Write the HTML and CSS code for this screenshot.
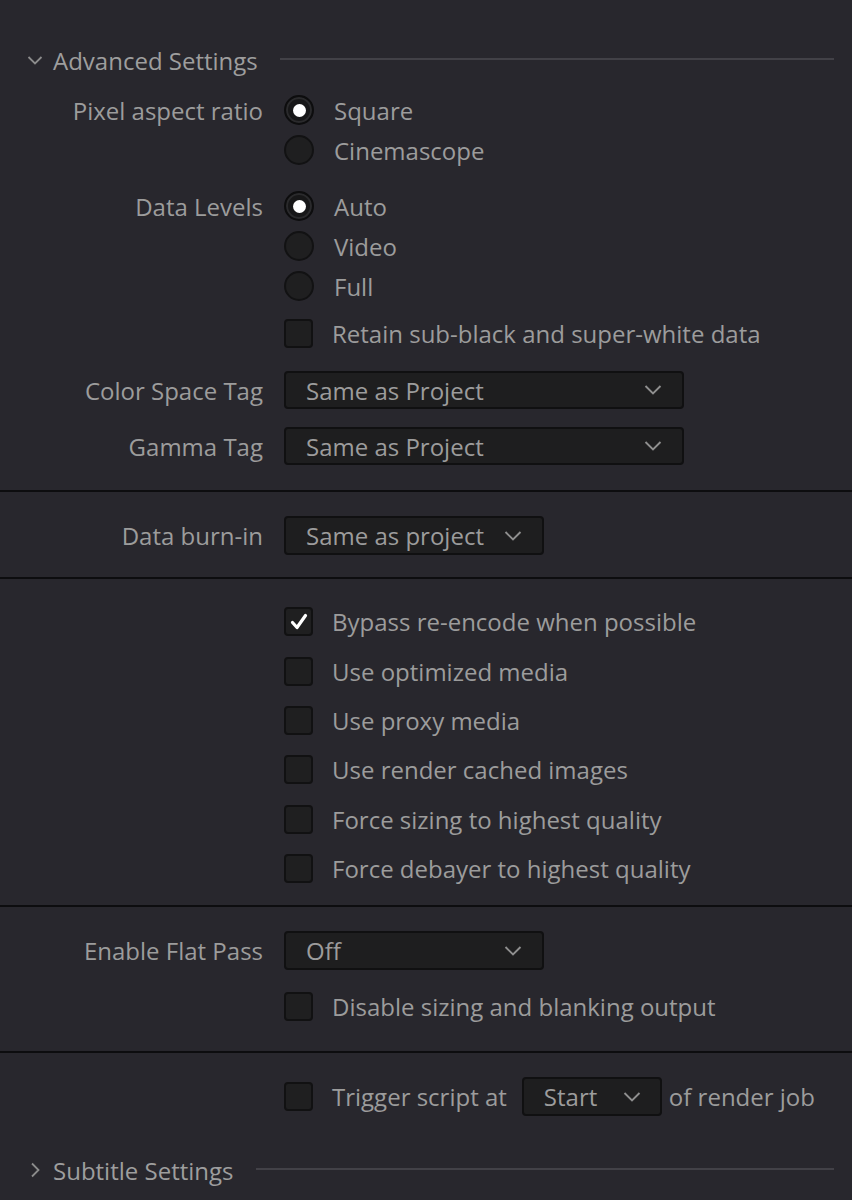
FILE: index.html
```html
<!DOCTYPE html>
<html>
<head>
<meta charset="utf-8">
<link rel="stylesheet" href="styles.css">
</head>
<body>
<div class="panel">
  <div class="sec-head top">
    <svg class="chev" viewBox="0 0 16 16" width="16" height="16"><path d="M1.5 5 L8 11.5 L14.5 5" fill="none" stroke="#8c8c8c" stroke-width="1.8"/></svg>
    <span class="sec-title">Advanced Settings</span>
    <span class="sec-line"></span>
  </div>

  <div class="group g-par">
    <div class="row r40"><div class="label">Pixel aspect ratio</div><div class="ctl"><span class="radio on"></span><span class="opt">Square</span></div></div>
    <div class="row r40"><div class="label"></div><div class="ctl"><span class="radio"></span><span class="opt">Cinemascope</span></div></div>
  </div>

  <div class="group g-levels">
    <div class="row r40"><div class="label">Data Levels</div><div class="ctl"><span class="radio on"></span><span class="opt">Auto</span></div></div>
    <div class="row r40"><div class="label"></div><div class="ctl"><span class="radio"></span><span class="opt">Video</span></div></div>
    <div class="row r40"><div class="label"></div><div class="ctl"><span class="radio"></span><span class="opt">Full</span></div></div>
    <div class="row r40 retain"><div class="label"></div><div class="ctl"><span class="check"></span><span class="opt c">Retain sub-black and super-white data</span></div></div>
  </div>

  <div class="group g-tags">
    <div class="row r38"><div class="label">Color Space Tag</div><div class="ctl"><div class="drop wide"><span>Same as Project</span><svg class="dchev" viewBox="0 0 18 12" width="18" height="12"><path d="M1.5 2 L9 9.5 L16.5 2" fill="none" stroke="#8f8f8f" stroke-width="1.9"/></svg></div></div></div>
    <div class="row r38 gamma"><div class="label">Gamma Tag</div><div class="ctl"><div class="drop wide"><span>Same as Project</span><svg class="dchev" viewBox="0 0 18 12" width="18" height="12"><path d="M1.5 2 L9 9.5 L16.5 2" fill="none" stroke="#8f8f8f" stroke-width="1.9"/></svg></div></div></div>
  </div>

  <div class="sep s1"></div>

  <div class="group g-burn">
    <div class="row r39"><div class="label">Data burn-in</div><div class="ctl"><div class="drop mid"><span>Same as project</span><svg class="dchev" viewBox="0 0 18 12" width="18" height="12"><path d="M1.5 2 L9 9.5 L16.5 2" fill="none" stroke="#8f8f8f" stroke-width="1.9"/></svg></div></div></div>
  </div>

  <div class="sep s2"></div>

  <div class="group g-checks">
    <div class="row r49"><div class="label"></div><div class="ctl"><span class="check on"><svg viewBox="0 0 20 20" width="20" height="20"><path d="M3.5 10.5 L8 15.5 L16.5 3.5" fill="none" stroke="#ffffff" stroke-width="3.2" stroke-linejoin="round" stroke-linecap="round"/></svg></span><span class="opt c">Bypass re-encode when possible</span></div></div>
    <div class="row r49"><div class="label"></div><div class="ctl"><span class="check"></span><span class="opt c">Use optimized media</span></div></div>
    <div class="row r49"><div class="label"></div><div class="ctl"><span class="check"></span><span class="opt c">Use proxy media</span></div></div>
    <div class="row r49"><div class="label"></div><div class="ctl"><span class="check"></span><span class="opt c">Use render cached images</span></div></div>
    <div class="row r49"><div class="label"></div><div class="ctl"><span class="check"></span><span class="opt c">Force sizing to highest quality</span></div></div>
    <div class="row r49"><div class="label"></div><div class="ctl"><span class="check"></span><span class="opt c">Force debayer to highest quality</span></div></div>
  </div>

  <div class="sep s3"></div>

  <div class="group g-flat">
    <div class="row r39"><div class="label">Enable Flat Pass</div><div class="ctl"><div class="drop mid"><span>Off</span><svg class="dchev" viewBox="0 0 18 12" width="18" height="12"><path d="M1.5 2 L9 9.5 L16.5 2" fill="none" stroke="#8f8f8f" stroke-width="1.9"/></svg></div></div></div>
    <div class="row r40 disable"><div class="label"></div><div class="ctl"><span class="check"></span><span class="opt c">Disable sizing and blanking output</span></div></div>
  </div>

  <div class="sep s4"></div>

  <div class="group g-trigger">
    <div class="row r39"><div class="label"></div><div class="ctl"><span class="check"></span><span class="opt c">Trigger script at</span><div class="drop small"><span>Start</span><svg class="dchev" viewBox="0 0 18 12" width="18" height="12"><path d="M1.5 2 L9 9.5 L16.5 2" fill="none" stroke="#8f8f8f" stroke-width="1.9"/></svg></div><span class="opt after">of render job</span></div></div>
  </div>

  <div class="sec-head bottom">
    <svg class="chev" viewBox="0 0 16 16" width="16" height="16"><path d="M5 1.5 L11.5 8 L5 14.5" fill="none" stroke="#8c8c8c" stroke-width="1.8"/></svg>
    <span class="sec-title">Subtitle Settings</span>
    <span class="sec-line"></span>
  </div>
</div>
</body>
</html>
```

FILE: styles.css
```css
html, body {
  margin: 0;
  padding: 0;
  background: #28272d;
}
body {
  width: 852px;
  height: 1200px;
  overflow: hidden;
  font-family: "Open Sans", "Noto Sans", "DejaVu Sans", sans-serif;
  font-size: 24px;
  color: #9c9c9c;
}
.panel {
  display: flex;
  flex-direction: column;
}
.sec-head {
  display: flex;
  align-items: center;
  height: 40px;
}
.sec-head.top {
  margin-top: 40px;
  margin-bottom: 10px;
}
.sec-head.bottom {
  margin-top: 34px;
}
.chev {
  margin-left: 27px;
  width: 16px;
  flex: none;
}
.sec-title {
  margin-left: 10px;
  color: #9e9e9e;
  white-space: nowrap;
}
.sec-line {
  flex: 1;
  height: 2px;
  background: #424147;
  margin-left: 22px;
  margin-right: 18px;
  margin-top: -3px;
}
.group {
  display: flex;
  flex-direction: column;
}
.g-levels { margin-top: 16px; }
.g-tags { margin-top: 18px; gap: 18px; }
.g-burn { margin-top: 24px; }
.g-checks { margin-top: 18px; }
.g-flat { margin-top: 24px; }
.g-trigger { margin-top: 24px; }
.retain { margin-top: 7px; }
.disable { margin-top: 16px; }

.row {
  display: flex;
  align-items: center;
}
.r40 { height: 40px; }
.r38 { height: 38px; }
.r39 { height: 39px; }
.r49 { height: 49.4px; }

.label {
  width: 263px;
  flex: none;
  text-align: right;
  white-space: nowrap;
}
.ctl {
  margin-left: 21px;
  display: flex;
  align-items: center;
  white-space: nowrap;
}
.radio {
  width: 26px;
  height: 26px;
  border-radius: 50%;
  border: 2px solid #121213;
  background: #1f1f20;
  display: flex;
  align-items: center;
  justify-content: center;
  flex: none;
}
.radio.on {
  background: #171718;
  border-color: #0d0d0e;
  box-shadow: inset 0 0 0 2px #2a2a2c;
}
.radio.on::after {
  content: "";
  width: 13px;
  height: 13px;
  border-radius: 50%;
  background: #ffffff;
}
.opt {
  margin-left: 20px;
}
.opt.c {
  margin-left: 19px;
}
.check {
  width: 25px;
  height: 25px;
  border: 2px solid #111112;
  border-radius: 4px;
  background: #1f1f20;
  display: flex;
  align-items: center;
  justify-content: center;
  flex: none;
}
.drop {
  box-sizing: border-box;
  height: 39px;
  border: 2px solid #101011;
  border-radius: 4px;
  background: #1e1e1f;
  display: flex;
  align-items: center;
  justify-content: space-between;
  padding-left: 20px;
  padding-right: 20px;
  color: #9c9c9c;
}
.r38 .drop { height: 38px; }
.drop.wide { width: 400px; }
.drop.mid { width: 260px; }
.drop.small {
  width: 140px;
  margin-left: 15px;
  padding-left: 20px;
  padding-right: 19px;
}
.dchev { flex: none; }
.opt.after { margin-left: 7px; }

.sep {
  height: 2px;
  background: #0d0d0f;
}
.s1 { margin-top: 25px; }
.s2 { margin-top: 22px; }
.s3 { margin-top: 12px; }
.s4 { margin-top: 25px; }
```
